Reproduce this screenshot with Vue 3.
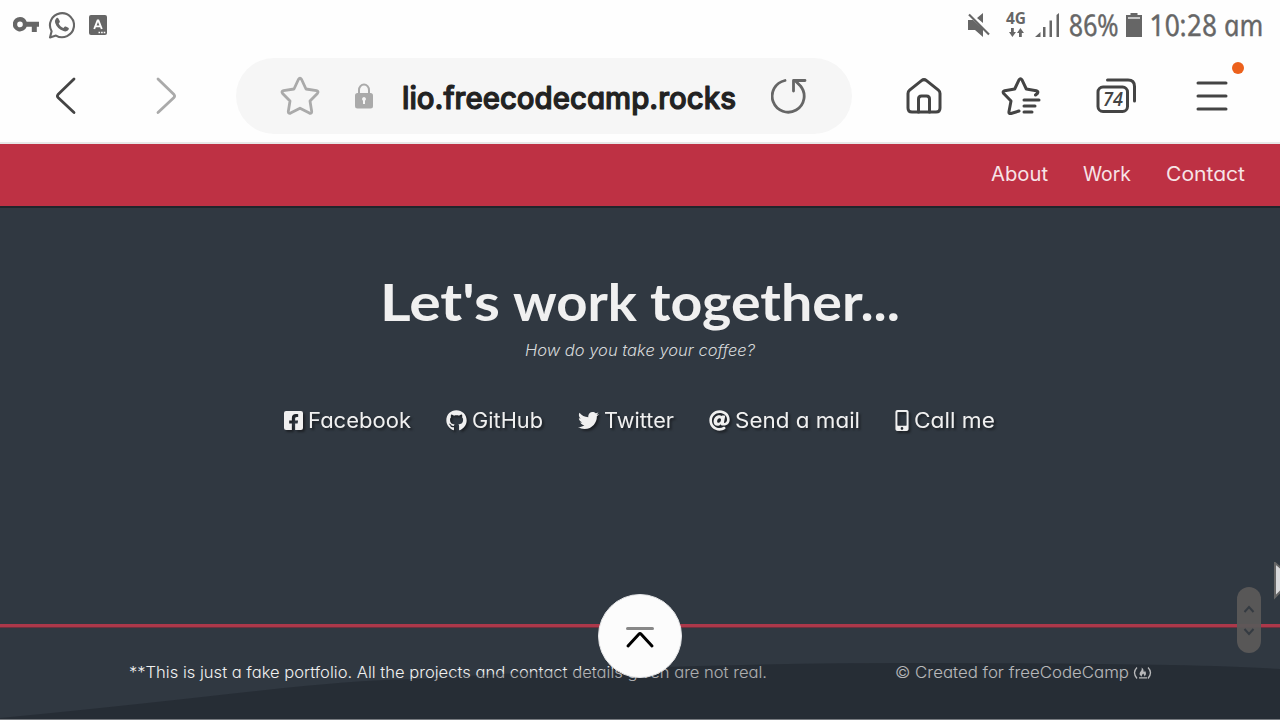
<script setup>
import { h } from 'vue'

// Single line of text fitted to a given advance width; `skew` straightens an italic face.
const FitText = (props) =>
  h('svg', { width: props.w, height: props.h, overflow: 'visible' }, [
    h('text', {
      x: 0,
      y: 0,
      textLength: props.w,
      lengthAdjust: 'spacingAndGlyphs',
      transform: `translate(${props.dx || 0} ${props.base}) skewX(${props.skew || 0})`
    }, props.text)
  ])
FitText.props = ['w', 'h', 'base', 'text', 'skew', 'dx']

const nav = [
  { text: 'About', w: 57 },
  { text: 'Work', w: 48 },
  { text: 'Contact', w: 79 }
]

const links = [
  { text: 'Facebook', w: 103, iw: 19, box: '0 32 448 448', d: 'M400 32H48A48 48 0 0 0 0 80v352a48 48 0 0 0 48 48h137.25V327.69h-63V256h63v-54.64c0-62.15 37-96.48 93.67-96.48 27.14 0 55.52 4.84 55.52 4.84v61h-31.27c-30.81 0-40.42 19.12-40.42 38.73V256h68.78l-11 71.69h-57.78V480H400a48 48 0 0 0 48-48V80a48 48 0 0 0-48-48z' },
  { text: 'GitHub', w: 71, iw: 21, box: '0 0 496 512', d: 'M244.8 8C106.1 8 0 113.3 0 252c0 110.9 69.8 205.8 169.5 239.2 12.8 2.3 17.3-5.6 17.3-12.1 0-6.2-.3-40.4-.3-61.4 0 0-70 15-84.7-29.8 0 0-11.4-29.1-27.8-36.6 0 0-22.9-15.7 1.6-15.4 0 0 24.9 2 38.6 25.8 21.9 38.6 58.6 27.5 72.9 20.9 2.3-16 8.8-27.1 16-33.7-55.9-6.2-112.3-14.3-112.3-110.5 0-27.5 7.6-41.3 23.6-58.9-2.6-6.5-11.1-33.3 2.6-67.9 20.9-6.5 69 27 69 27 20-5.6 41.5-8.5 62.8-8.5s42.8 2.9 62.8 8.5c0 0 48.1-33.6 69-27 13.7 34.7 5.2 61.4 2.6 67.9 16 17.7 25.8 31.5 25.8 58.9 0 96.5-58.9 104.2-114.8 110.5 9.2 7.9 17 22.9 17 46.4 0 33.7-.3 75.4-.3 83.6 0 6.5 4.6 14.4 17.3 12.1C428.2 457.8 496 362.9 496 252 496 113.3 383.5 8 244.8 8z' },
  { text: 'Twitter', w: 70, iw: 21, box: '0 0 512 512', d: 'M459.37 151.716c.325 4.548.325 9.097.325 13.645 0 138.72-105.583 298.558-298.558 298.558-59.452 0-114.68-17.219-161.137-47.106 8.447.974 16.568 1.299 25.34 1.299 49.055 0 94.213-16.568 130.274-44.832-46.132-.975-84.792-31.188-98.112-72.772 6.498.974 12.995 1.624 19.818 1.624 9.421 0 18.843-1.3 27.614-3.573-48.081-9.747-84.143-51.98-84.143-102.985v-1.299c13.969 7.797 30.214 12.67 47.431 13.319-28.264-18.843-46.781-51.005-46.781-87.391 0-19.492 5.197-37.36 14.294-52.954 51.655 63.675 129.3 105.258 216.365 109.807-1.624-7.797-2.599-15.918-2.599-24.04 0-57.828 46.782-104.934 104.934-104.934 30.213 0 57.502 12.67 76.67 33.137 23.715-4.548 46.456-13.32 66.599-25.34-7.798 24.366-24.366 44.833-46.132 57.827 21.117-2.273 41.584-8.122 60.426-16.243-14.292 20.791-32.161 39.308-52.628 54.253z' },
  { text: 'Send a mail', w: 125, iw: 21, box: '0 0 512 512', d: 'M256 8C118.941 8 8 118.919 8 256c0 137.059 110.919 248 248 248 48.154 0 95.342-14.14 135.408-40.223 12.005-7.815 14.625-24.288 5.552-35.372l-10.177-12.433c-7.671-9.371-21.179-11.667-31.373-5.129C325.92 429.757 291.314 440 256 440c-101.458 0-184-82.542-184-184S154.542 72 256 72c100.139 0 184 57.619 184 160 0 38.786-21.093 79.742-58.17 83.693-17.349-.454-16.91-12.857-13.476-30.024l23.433-121.11C394.653 149.75 383.308 136 368.225 136h-44.981a13.518 13.518 0 0 0-13.432 11.993l-.01.092c-14.697-17.901-40.448-21.775-59.971-21.775-74.58 0-137.831 62.234-137.831 151.46 0 65.303 36.785 105.87 96 105.87 26.984 0 57.369-15.637 74.991-38.333 9.522 34.104 40.613 34.104 70.671 34.104C462.609 379.41 504 307.798 504 232 504 95.653 394.023 8 256 8zm-21.68 304.43c-22.249 0-36.07-15.623-36.07-40.771 0-44.993 30.779-72.729 58.63-72.729 22.292 0 35.601 15.241 35.601 40.77 0 45.061-33.875 72.73-58.161 72.73z' },
  { text: 'Call me', w: 81, iw: 14, box: '0 0 320 512', d: 'M272 0H48C21.5 0 0 21.5 0 48v416c0 26.5 21.5 48 48 48h224c26.5 0 48-21.5 48-48V48c0-26.5-21.5-48-48-48zM160 480c-17.7 0-32-14.3-32-32s14.3-32 32-32 32 14.3 32 32-14.3 32-32 32zm112-108c0 6.6-5.4 12-12 12H60c-6.6 0-12-5.4-12-12V60c0-6.6 5.4-12 12-12h200c6.6 0 12 5.4 12 12v312z' }
]
</script>

<template>
  <div class="screen">
    <header class="status">
      <div class="status-left">
        <svg class="key" width="26" height="16" viewBox="0 0 26 16"><path fill-rule="evenodd" d="M7 0a7.2 7.2 0 0 1 6.7 4.8H26v5h-2.2V15h-5V9.800H13.700A7.200 7.200 0 1 1 7 0zM7 4.600a2.800 2.800 0 1 0 0 5.600 2.800 2.800 0 0 0 0-5.600z" /></svg>
        <svg class="wa" width="27" height="29" viewBox="0 0 27 29"><path d="M2 26.500l1.600-6.300A12 12 0 1 1 8 24.600z" fill="none" stroke="#666" stroke-width="2.100" stroke-linejoin="round" /><path d="M8.400 7.300c.7-.7 1.500-.6 2 .2l1.400 2.700c.3.700-.2 1.300-1.100 2.200.9 2 2.600 3.600 4.800 4.500 1.200-1.500 1.600-1.700 2.300-1.400l2.500 1.300c.8.500.7 1.100.1 2-1.100 1.600-3.100 1.900-4.900 1.300-4.100-1.200-7-4.200-8.300-8-.6-2 0-3.700 1.200-4.800z" /></svg>
        <svg width="18" height="20" viewBox="0 0 18 20"><rect width="18" height="20" rx="2" /><path d="M5.200 14 8.600 5.500h.8L12.800 14M6.600 11.400h4.800" stroke="#fff" stroke-width="1.900" fill="none" /><path d="M9.500 17.500h1.600m1 0h1.600m1 0h1.600" stroke="#fff" stroke-width="1.500" /></svg>
      </div>
      <div class="status-right">
        <svg class="mute" width="23" height="24" viewBox="0 0 23 24"><path d="M0 7h5l10 9v8l-8-7H0zM9 5l6-5v10z" /><path d="M1 1.500 21 21.500" stroke="#666" stroke-width="2.200" /></svg>
        <div class="net">
          <FitText class="fourg" text="4G" :w="20" :h="12" :base="12" />
          <svg width="15" height="9" viewBox="0 0 15 9"><path d="M2 0h2.800v4H7L3.400 9 0 4h2zM10 9h2.800V5H15L11.400 0 8 5h2z" /></svg>
        </div>
        <svg class="signal" width="25" height="24" viewBox="0 0 25 24"><path d="M0 24h5.500v-5zM8 14h2.500v10H8zM14.500 7.500H17V24h-2.500zM21.500 2 24 0v24h-2.500z" /></svg>
        <FitText class="hand thin" text="86%" :w="50" :h="28" :base="24" :skew="11" :dx="2" />
        <svg class="battery" width="16" height="24" viewBox="0 0 16 24"><path d="M4.500 0h7v2H16v22H0V2h4.500z" /><path d="M2 4h12v2H2z" fill="#c6c6c6" /></svg>
        <FitText class="hand thin" text="10:28 am" :w="114" :h="28" :base="24" :skew="11" :dx="1" />
      </div>
    </header>

    <div class="toolbar">
      <svg class="back" width="22" height="38" viewBox="0 0 22 38"><path d="M19 2 3 17.500q-1.200 1.500 0 3L19 35.500" /></svg>
      <svg class="forward" width="22" height="38" viewBox="0 0 22 38"><path d="m3 2 16 15.500q1.200 1.500 0 3L3 35.500" /></svg>
      <div class="address">
        <svg class="star" width="40" height="40" viewBox="0 0 40 40"><path d="M18.400 3.500q1.600-2.500 3.200 0L26 13l10.500 1.600q2.500.8.900 2.800L30 25l1.700 10.500q0 2.500-2.300 1.600L20 32.200l-9.400 4.900q-2.300.9-2.300-1.600L10 25l-7.400-7.600q-1.600-2 .9-2.800L14 13z" /></svg>
        <svg class="lock" width="18" height="26" viewBox="0 0 18 26"><path d="M4 11V7a5 5.500 0 0 1 10 0v4" fill="none" stroke="#aaa" stroke-width="2" /><rect y="10" width="18" height="15.500" rx="2.500" /><path d="M9 14a2 2 0 0 1 1 3.700V21H8v-3.300A2 2 0 0 1 9 14z" fill="#f6f6f6" /></svg>
        <FitText class="url" text="lio.freecodecamp.rocks" :w="334" :h="50" :base="37.5" />
        <svg class="reload" width="36" height="38" viewBox="0 0 36 38"><path d="M14 3.500A16 16 0 1 0 29.500 9L24 3.500" /><path d="M22.500 14V3.500H34" /></svg>
      </div>
      <svg class="tool home" width="36" height="36" viewBox="0 0 36 36"><path d="M2 15.500q0-2 1.600-3.300L15.500 2.600q2.500-2 5 0l11.900 9.600q1.600 1.300 1.600 3.300V30q0 4-4 4H6q-4 0-4-4z" /><path d="M12.500 34V21q0-3 3-3h5q3 0 3 3v13" /></svg>
      <svg class="tool fav" width="40" height="38" viewBox="0 0 40 38"><path d="M18 34l-8 2.500q-2.500.5-2-2L10 24l-7.300-7.500q-1.500-2 1-2.800l10-1.700 4.300-9.200q1.500-2 3 0l4.300 9.200 10 1.700q2.500.8 1 2.800L34.500 18" /><path d="M23 23h15M23 29h11M23 35h8" /></svg>
      <div class="tabs">
        <svg class="tool" width="40" height="36" viewBox="0 0 40 36"><path d="M11.500 2H32q6.500 0 6.500 6.500V23" /><rect x="2" y="9" width="29.500" height="24.500" rx="5" /></svg>
        <FitText class="count" text="74" :w="20" :h="16" :base="16" />
      </div>
      <div class="menu">
        <svg class="tool" width="32" height="32" viewBox="0 0 32 32"><path d="M2 3h28M2 16h28M2 29h28" /></svg>
        <span class="dot"></span>
      </div>
    </div>

    <nav class="nav">
      <FitText v-for="n in nav" :key="n.text" :text="n.text" :w="n.w" :h="24" :base="19" />
    </nav>

    <main class="contact">
      <div class="title">
        <FitText text="Let's" :w="120" :h="60" :base="43" />
        <FitText text="work" :w="124" :h="60" :base="43" />
        <FitText text="together..." :w="250" :h="60" :base="43" />
      </div>
      <FitText class="subtitle" text="How do you take your coffee?" :w="230" :h="24" :base="18" />
      <div class="links">
        <a v-for="l in links" :key="l.text" class="link">
          <svg class="link-icon" :width="l.iw" height="21" :viewBox="l.box"><path :d="l.d" /></svg>
          <FitText :text="l.text" :w="l.w" :h="26" :base="20" />
        </a>
      </div>
    </main>

    <footer class="footer">
      <FitText class="note" text="**This is just a fake portfolio. All the projects and contact details given are not real." :w="638" :h="24" :base="18" />
      <div class="credit">
        <FitText text="© Created for freeCodeCamp" :w="234" :h="24" :base="18" />
        <svg class="fcc" width="19" height="14" viewBox="0 0 19 14"><path d="M4 1.500q-5 5 0 11M15 1.500q5 5 0 11M6 11.800h8" fill="none" stroke="#fff" stroke-width="1.300" /><path d="M8.600 1.500c3 1.800 1.300 4 2.600 4.600.6-.2.400-1 .4-1.500 2 2 1.800 4.800-.4 6 .6-1.700-.7-2.200-1-3-.7 1-1.700 1.500-1.200 3-3.200-1.600-2.800-4-1-5.700.8-1 .9-2 .6-3.400z" /></svg>
      </div>
      <svg class="wave" width="1280" height="92" viewBox="0 0 1280 92"><path d="M0 91Q105 81 233 66.500T420 52Q650 36 920 36T1280 42V92H0z" /></svg>
    </footer>

    <div class="top-button">
      <svg width="30" height="24" viewBox="0 0 30 24"><path d="M2.500 2.500h25" stroke="#888" /><path d="M3 20 13.800 8.200q1.200-1.200 2.400 0L27 20" stroke="#000" /></svg>
    </div>
    <div class="scroller">
      <svg width="12" height="8" viewBox="0 0 12 8"><path d="M1.500 7 6 2l4.500 5" /></svg>
      <svg width="12" height="8" viewBox="0 0 12 8"><path d="M1.500 1 6 6l4.500-5" /></svg>
    </div>
    <svg class="cursor" width="7" height="38" viewBox="0 0 7 38"><path d="M1 1v34l7-7V7z" fill="#d8d9db" stroke="#666" stroke-width="2" /></svg>
  </div>
</template>

<style>
body { overflow: hidden; }
</style>

<style scoped>
.screen { position: relative; width: 1280px; height: 720px; overflow: hidden; background: #fefefe; font-family: Inter, "Noto Sans", sans-serif; font-feature-settings: "cv11"; display: flex; flex-direction: column; }
svg { display: block; flex: none; }
.status { height: 50px; display: flex; justify-content: space-between; fill: #666; flex: none; }
.status-left { display: flex; align-items: center; padding-left: 13px; }
.key { margin-right: 10px; }
.wa { margin-right: 14px; margin-left: -1px; }
.status-right { display: flex; padding: 12px 16px 0 0; align-items: flex-start; }
.mute { margin-right: 15px; margin-top: 1px; }
.net { display: flex; flex-direction: column; align-items: center; gap: 4px; margin: 0 9px 0 0; }
.fourg { font-family: "Open Sans", sans-serif; font-size: 16px; font-weight: 700; }
.signal { margin: 1px 8px 0 0; }
.hand { font-family: "Open Sans", sans-serif; font-style: italic; stroke: #666; stroke-width: .4; stroke-linejoin: round; }
.thin { font-size: 30px; font-weight: 400; fill: #666; }
.battery { margin: 1px 8px 0 8px; }
.toolbar { height: 92px; display: flex; align-items: center; border-bottom: 2px solid #e7e7e7; flex: none; padding: 0 0 0 55px; }
.back, .forward, .reload, .star { fill: none; stroke-width: 2.800; stroke-linecap: round; stroke-linejoin: round; }
.back { stroke: #444; margin-right: 78px; }
.forward { stroke: #aaa; margin-right: 59px; }
.address { width: 616px; height: 76px; border-radius: 38px; background: #f6f6f6; display: flex; align-items: center; box-sizing: border-box; padding-left: 44px; margin-right: 54px; flex: none; }
.star { stroke: #aaa; margin-right: 35px; }
.lock { fill: #aaa; margin-right: 29px; }
.url { font-size: 31px; font-weight: 500; fill: #222; stroke: #222; stroke-width: 1.200; stroke-linejoin: round; margin-right: 35px; }
.reload { stroke: #666; }
.tool { fill: none; stroke: #444; stroke-width: 3; stroke-linecap: round; stroke-linejoin: round; }
.home { margin-right: 59px; }
.fav { margin-right: 55px; }
.tabs { position: relative; margin-right: 60px; }
.count { position: absolute; left: 7px; top: 12px; font-family: "Open Sans", sans-serif; font-size: 20px; font-style: italic; font-weight: 600; fill: #444; }
.menu { position: relative; }
.dot { position: absolute; width: 12px; height: 12px; border-radius: 50%; background: #ec611c; left: 36px; top: -18px; }
.nav { height: 44px; background: #be3144; border-bottom: 2px solid #20252c; flex: none; display: flex; justify-content: flex-end; gap: 35px; padding: 18px 35px 0 0; font-size: 19.500px; fill: #f7e4e7; }
.contact { height: 416px; background: #303841; display: flex; flex-direction: column; align-items: center; flex: none; box-sizing: border-box; padding-top: 70px; }
.title { display: flex; gap: 13px; font-family: Lato, sans-serif; font-weight: 700; font-size: 52px; fill: #f0f0f0; }
.subtitle { font-size: 15.500px; font-style: italic; font-weight: 300; fill: #d6d8da; }
.links { display: flex; gap: 35px; margin-top: 46px; margin-right: 2px; }
.link { display: flex; align-items: center; gap: 5px; fill: #f0f0f0; font-size: 21px; filter: drop-shadow(2px 2px 1px #1c2025); }
.link-icon { margin-bottom: 2px; }
.footer { position: relative; height: 59px; background: #303841; border-top: 3px solid #ac384a; border-bottom: 1px solid #777b80; flex: none; display: flex; padding: 33px 0 0 129px; font-size: 15.700px; font-weight: 300; fill: #f0f0f0; box-shadow: inset 0 1px #6e303e; }
.note { margin-right: 128px; }
.credit { display: flex; gap: 4px; fill: #fff; }
.fcc { margin-top: 6px; }
.wave { position: absolute; left: 0; top: 0; fill: rgba(16, 20, 25, .3); }
.top-button { position: absolute; left: 598px; top: 594px; width: 84px; height: 84px; box-sizing: border-box; border: 1px solid #e5e6e8; border-radius: 50%; background: #fcfcfc; display: flex; align-items: center; justify-content: center; }
.top-button svg { fill: none; stroke-width: 3; stroke-linecap: round; stroke-linejoin: round; margin-top: 4px; }
.scroller { position: absolute; left: 1237px; top: 587px; width: 24px; height: 66px; border-radius: 12px; background: rgba(91, 89, 88, .95); display: flex; flex-direction: column; align-items: center; justify-content: center; gap: 15px; }
.scroller svg { fill: none; stroke: #353b42; stroke-width: 2; }
.cursor { position: absolute; left: 1274px; top: 562px; }
</style>
